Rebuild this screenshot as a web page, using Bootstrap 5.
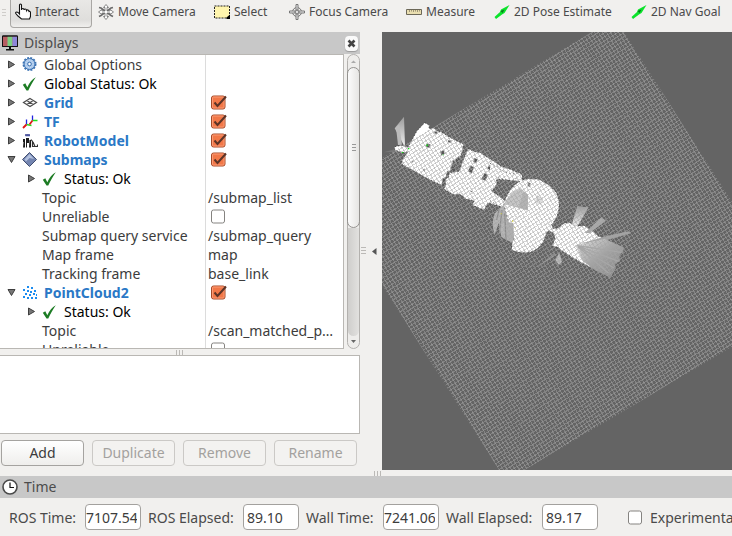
<!DOCTYPE html>
<html lang="en">
<head>
<meta charset="utf-8">
<meta name="viewport" content="width=device-width, initial-scale=1">
<title>RViz</title>
<link rel="stylesheet" href="https://cdn.jsdelivr.net/npm/bootstrap@5.3.0/dist/css/bootstrap.min.css">
<style>
body{font-family:"Noto Sans","Open Sans",sans-serif;font-size:14px;line-height:19px;color:#3c3c3c;background:#f1f0ee}
svg{display:block;flex:none}
.tools{display:grid;grid-template-columns:83px 116px 75px 117px 88px 137px auto;grid-auto-rows:28px;padding:0 0 4px 10px;position:relative}
.tools::before{content:"";position:absolute;left:2px;top:9px;width:4px;height:9px;background:repeating-linear-gradient(#cfcdca 0 1px,transparent 1px 3px)}
.tool{border:1px solid transparent;border-top:0;background:none;color:#4a4a4a;font-size:12px;line-height:16px;padding:0 4px 4px;gap:4px;white-space:nowrap}
.tool.pressed{border-color:#a9a7a4;border-radius:0 0 4px 4px;background:linear-gradient(#e9e8e6,#dfdedc 75%,#f0efed);justify-self:start;width:82px}
.main-area{min-height:0}
.left-pane{width:360px}
.title-bar{background:#c8c8c8;height:22px;padding:0 2px;color:#4c4c4c;gap:6px}
.title-bar span{padding-bottom:2px}
.close-btn{width:13px;height:15px;border:0;border-radius:4px;background:#fafafa;box-shadow:0 1px 1px #9a9a9a;padding:0 2px}
.tree-box{flex:1 1 0;min-height:0;overflow:hidden}
.tree-view{flex:1 1 0;background:#fff;border:1px solid #b9b7b3;border-left:0;overflow:hidden}
.tree{width:100%;table-layout:fixed;border-collapse:separate;border-spacing:0}
.tree td{height:19px;padding:0;line-height:19px;white-space:nowrap;overflow:hidden;text-overflow:ellipsis}
.tree .c-name{width:206px;border-right:1px solid #dcdcdc}
.tree .c-val{padding:0 4px 0 2px}
.tree .name{display:flex;align-items:center;gap:6px;padding-left:7px;height:19px}
.tree .child{padding-left:27px}
.tree .prop{padding-left:42px}
.tree .ok{color:#000}
.tree .disp{color:#2a78c6;font-weight:700}
.expander{border:0;background:none;padding:0;width:9px;height:9px}
.chk{appearance:none;display:block;margin:0 0 0 3px;width:16px;height:15px;background:url("data:image/svg+xml,%3Csvg xmlns='http://www.w3.org/2000/svg' viewBox='0 0 16 15'%3E%3Crect x='.5' y='1' width='13' height='13' rx='2' fill='%23fff' stroke='%23858380'/%3E%3C/svg%3E")}
.chk:checked{background:url("data:image/svg+xml,%3Csvg xmlns='http://www.w3.org/2000/svg' viewBox='0 0 16 15'%3E%3Crect x='.5' y='1' width='13.5' height='13' rx='2' fill='%23f27848' stroke='%23a34a28'/%3E%3Crect x='1.5' y='2' width='11.500' height='11' rx='1' fill='none' stroke='%23fa9b76'/%3E%3Cpath d='M3.500 7.500l3 3.500L15 1.500' fill='none' stroke='%235c3427' stroke-width='2'/%3E%3C/svg%3E")}
.scroller{width:13px;margin-left:3px;border:1px solid #b3b1ae;border-radius:7px;background:#eeedeb}
.scroller .thumb{height:161px;border:1px solid #94928f;border-radius:7px;background:linear-gradient(90deg,#fbfbfb,#e6e5e3);margin:0 -1px}
.scroller button{border:0;background:none;padding:0;height:12px}
.scroller .gap{background:linear-gradient(90deg,#cfcecc,#e2e1df);border-radius:0 0 6px 6px}
.grip-x{width:8px;height:5px;background:repeating-linear-gradient(90deg,#bbb9b6 0 1px,transparent 1px 3px)}
.grip-y{width:5px;height:8px;background:repeating-linear-gradient(#bbb9b6 0 1px,transparent 1px 3px)}
.split{height:6px}
.info{height:79px;background:#fff;border:1px solid #b9b7b3;border-left:0}
.actions{padding:6px 3px 4px 1px;gap:8px}
.act{flex:1 1 0;height:26px;padding:0;border:1px solid #a5a3a0;border-radius:4px;background:linear-gradient(#fff,#efeeec);color:#3c3c3c;font-size:14px;line-height:22px}
.act:disabled{border-color:#cbc9c6;background:#f3f2f0;color:#a3a19e;opacity:1}
.side-split{width:22px;padding-left:1px}
.view3d{background:#646464;min-width:0;min-height:0;overflow:hidden}
.view3d svg{width:100%;height:100%}
.times{height:38px;display:grid;grid-template-columns:76px 56px 102px 56px 84px 56px 103px 56px auto;align-items:center;padding-left:9px;color:#4a4a4a;white-space:nowrap;overflow:hidden}
.times .lab-next{padding-left:7px}
.times .chk-wrap{padding-left:27px;gap:6px}
.tf{width:56px;height:26px;border:1px solid #a3a19e;border-radius:4px;background:#fff;color:#3c3c3c;font-size:14px;padding:0 3px}
.tf-long{text-align:right;padding:0 3px 0 0}
</style>
<script src="https://cdn.jsdelivr.net/npm/bootstrap@5.3.0/dist/js/bootstrap.bundle.min.js"></script>
</head>
<body>
<svg width="0" height="0" class="position-absolute" aria-hidden="true">
<defs>
<symbol id="closed" viewBox="0 0 9 9"><path d="M1.500 1v7L7.500 4.500z" fill="#777" stroke="#3e3e3e"/></symbol>
<symbol id="opened" viewBox="0 0 9 9"><path d="M1 1.500h7L4.500 7.500z" fill="#777" stroke="#3e3e3e"/></symbol>
<symbol id="tick" viewBox="0 0 16 16"><path d="M.8 8.800l2.500-1.600 2 4C7.500 6.500 10 3.500 13.800 1.200 10.800 5.500 8.500 9.500 6.300 14.500H4.500z" fill="#1d7c24"/></symbol>
<symbol id="arrow" viewBox="0 0 16 16"><path d="M.5 13L6 8l1-2.500L15.500 1l-5 8L8 10.500 2 15z" fill="#0be32b"/><path d="M6.500 7l4-1.500L8.500 9z" fill="#087a1b"/></symbol>
<linearGradient id="ray" x1="0" y1="0" x2="1" y2="1"><stop offset="0" stop-color="#e4e4e4"/><stop offset=".5" stop-color="#a2a2a2"/><stop offset="1" stop-color="#858585"/></linearGradient>
<linearGradient id="rayUp" x1="0" y1="1" x2="0" y2="0"><stop offset="0" stop-color="#efefef"/><stop offset="1" stop-color="#9a9a9a"/></linearGradient>
<clipPath id="plane"><path d="M233-14L-58 161 124 449 417 275z"/></clipPath>
</defs>
</svg>
<div class="d-flex flex-column vh-100 overflow-hidden">
<header class="tools">
 <button class="tool pressed d-flex align-items-center" type="button"><svg width="16" height="17" viewBox="0 0 16 17"><path d="M4.500 10V2q0-1 1-1t1 1v5q0-1.500 1.300-1.500T9 7q0-1 1.200-1T11.500 7.500Q12 6.500 13 7t1 1.500q1.500-.5 1.500 1.500v3.500l-1 2.500h-8L3 13 .8 10.500q-.5-1.500 1-1.500 1.200 0 2.700 2z" fill="#fff" stroke="#111" stroke-width="1.100"/></svg>Interact</button>
 <button class="tool d-flex align-items-center" type="button"><svg width="16" height="16" viewBox="0 0 16 16"><g fill="#fff" stroke="#6c6c6c" stroke-width=".8"><path d="M1 3.500L3 4l10 7.500 2 1M1 12.500l2-1L13 4l2-.5" fill="none" stroke-width="1.600"/><path d="M8 .5l2.500 3H9V7h3V5.500L15.500 8 12 10.500V9H9v3.500h1.500L8 15.500l-2.500-3H7V9H4v1.500L.5 8 4 5.500V7h3V3.500H5.500z"/></g></svg>Move Camera</button>
 <button class="tool d-flex align-items-center" type="button"><svg width="16" height="14" viewBox="0 0 16 14"><path d="M.5 1h15v12H.5z" fill="#fff5ae" stroke="#222" stroke-dasharray="2 1"/><path d="M16 9.500V14h-3.500v-1.500z" fill="#000"/></svg>Select</button>
 <button class="tool d-flex align-items-center" type="button"><svg width="16" height="16" viewBox="0 0 16 16"><g fill="none" stroke="#777"><circle cx="8" cy="8" r="4.500"/><circle cx="8" cy="8" r="2" fill="#ddd"/><path d="M7 .5h2V6H7zM7 10h2v5.500H7zM.5 7H6v2H.5zM10 7h5.500v2H10z" fill="#eee"/></g></svg>Focus Camera</button>
 <button class="tool d-flex align-items-center" type="button"><svg width="16" height="16" viewBox="0 0 16 16"><path d="M.5 5.500h15v5H.5z" fill="#e9deb0" stroke="#6c6858"/><path d="M3.500 6v2M5.500 6v1.500M7.500 6v2M9.500 6v1.500M11.500 6v2M13.500 6v1.500" stroke="#8c8468" stroke-width=".8"/></svg>Measure</button>
 <button class="tool d-flex align-items-center" type="button"><svg width="16" height="16"><use href="#arrow"/></svg>2D Pose Estimate</button>
 <button class="tool d-flex align-items-center" type="button"><svg width="16" height="16"><use href="#arrow"/></svg>2D Nav Goal</button>
</header>
<main class="main-area d-flex flex-grow-1">
 <section class="left-pane d-flex flex-column flex-shrink-0">
  <div class="title-bar d-flex align-items-center">
   <svg width="16" height="16" viewBox="0 0 16 16"><path d="M.5 1h15v10.500H.5z" fill="#b75d62" stroke="#111"/><path d="M5.500 1.500h5v9.500h-5z" fill="#7ccf83"/><path d="M10.500 1.500H15V11h-4.500z" fill="#8d86d8"/><path d="M.5 1h15v10.500H.5z" fill="none" stroke="#111"/><path d="M7 12h2v2h3v1.500H4V14h3z" fill="#111"/></svg>
   <span>Displays</span>
   <button class="close-btn ms-auto me-0" type="button" aria-label="Close"><svg width="9" height="9" viewBox="0 0 9 9"><path d="M1.500 1.500l6 6M7.500 1.500l-6 6" stroke="#444" stroke-width="2.600"/></svg></button>
  </div>
  <div class="tree-box d-flex">
   <div class="tree-view">
    <table class="tree">
     <tr><td class="c-name"><div class="name"><button class="expander" type="button" aria-label="Expand"><svg width="9" height="9"><use href="#closed"/></svg></button><svg width="16" height="16" viewBox="0 0 16 16"><circle cx="7.500" cy="7" r="5.500" fill="#a9c7ea" stroke="#3d73b3" stroke-width="1"/><circle cx="7.500" cy="7" r="6.200" fill="none" stroke="#3d73b3" stroke-width="1.600" stroke-dasharray="2 1.250"/><circle cx="7.500" cy="7" r="3.600" fill="none" stroke="#d6e5f7" stroke-dasharray="1 1"/><circle cx="7.500" cy="7" r="1.800" fill="#fff" stroke="#3d73b3"/></svg>Global Options</div></td><td class="c-val"></td></tr>
     <tr><td class="c-name"><div class="name ok"><button class="expander" type="button" aria-label="Expand"><svg width="9" height="9"><use href="#closed"/></svg></button><svg width="16" height="16"><use href="#tick"/></svg>Global Status: Ok</div></td><td class="c-val"></td></tr>
     <tr><td class="c-name"><div class="name disp"><button class="expander" type="button" aria-label="Expand"><svg width="9" height="9"><use href="#closed"/></svg></button><svg width="16" height="16" viewBox="0 0 16 16"><path d="M8 3.500L14.500 7.500 8 11.500 1.500 7.500zM4.700 5.500l6.500 4M11.300 5.500l-6.500 4" fill="none" stroke="#4c4c4c" stroke-width="1.200"/></svg>Grid</div></td><td class="c-val"><input class="chk" type="checkbox" checked aria-label="Grid"></td></tr>
     <tr><td class="c-name"><div class="name disp"><button class="expander" type="button" aria-label="Expand"><svg width="9" height="9"><use href="#closed"/></svg></button><svg width="16" height="16" viewBox="0 0 16 16"><g fill="none" stroke-width="1.300"><path d="M10.500 6.500V1.500M4.500 10.500V5.500" stroke="#2222e0"/><path d="M10.500 6.500h5M4.500 10.500l5 1" stroke="#20e020"/><path d="M10.500 6.500l-3 4M4.500 10.500L1 14" stroke="#e01818" stroke-width="1.800"/></g></svg>TF</div></td><td class="c-val"><input class="chk" type="checkbox" checked aria-label="TF"></td></tr>
     <tr><td class="c-name"><div class="name disp"><button class="expander" type="button" aria-label="Expand"><svg width="9" height="9"><use href="#closed"/></svg></button><svg width="16" height="16" viewBox="0 0 16 16"><path d="M3.500 2q2-1.500 4.500 0v1.500H3.500z" fill="#9aa7d8"/><path d="M3 2h5" stroke="#222a80" stroke-width="1.300"/><path d="M1 6h2v3H1zM1.500 9H3v5.500H1zM4 5h3v5H5v4.500H4zM7.500 7H9v7.500H7z" fill="#1b1b1b"/><path d="M9 6.500l1.500 2v5h2M11 9l2 4.500h2.500v-2" stroke="#333" fill="none" stroke-width="1.200"/></svg>RobotModel</div></td><td class="c-val"><input class="chk" type="checkbox" checked aria-label="RobotModel"></td></tr>
     <tr><td class="c-name"><div class="name disp"><button class="expander" type="button" aria-label="Collapse"><svg width="9" height="9"><use href="#opened"/></svg></button><svg width="16" height="16" viewBox="0 0 16 16"><path d="M7.500.5l7 7-7 7-7-7z" fill="#7485b0" stroke="#414e70"/><path d="M7.500 2L12 7 7.500 6 4 9.500 2.500 7.500z" fill="#b3c1de"/></svg>Submaps</div></td><td class="c-val"><input class="chk" type="checkbox" checked aria-label="Submaps"></td></tr>
     <tr><td class="c-name"><div class="name child ok"><button class="expander" type="button" aria-label="Expand"><svg width="9" height="9"><use href="#closed"/></svg></button><svg width="16" height="16"><use href="#tick"/></svg>Status: Ok</div></td><td class="c-val"></td></tr>
     <tr><td class="c-name"><div class="name prop">Topic</div></td><td class="c-val">/submap_list</td></tr>
     <tr><td class="c-name"><div class="name prop"><label for="unrel1">Unreliable</label></div></td><td class="c-val"><input class="chk" type="checkbox" id="unrel1"></td></tr>
     <tr><td class="c-name"><div class="name prop">Submap query service</div></td><td class="c-val">/submap_query</td></tr>
     <tr><td class="c-name"><div class="name prop">Map frame</div></td><td class="c-val">map</td></tr>
     <tr><td class="c-name"><div class="name prop">Tracking frame</div></td><td class="c-val">base_link</td></tr>
     <tr><td class="c-name"><div class="name disp"><button class="expander" type="button" aria-label="Collapse"><svg width="9" height="9"><use href="#opened"/></svg></button><svg width="16" height="16" viewBox="0 0 16 16"><path d="M5 1h2v2H5zM9 2h2v2H9zM1 4h2v2H1zM5 5h2v2H5zM12 5h2v2h-2zM8 6h2v2H8zM3 8h2v2H3zM7 9h2v2H7zM11 8h2v2h-2zM14 9h1v2h-1zM1 11h2v2H1zM5 12h2v2H5zM9 12h2v2H9zM13 12h2v2h-2z" fill="#1b8cf0"/></svg>PointCloud2</div></td><td class="c-val"><input class="chk" type="checkbox" checked aria-label="PointCloud2"></td></tr>
     <tr><td class="c-name"><div class="name child ok"><button class="expander" type="button" aria-label="Expand"><svg width="9" height="9"><use href="#closed"/></svg></button><svg width="16" height="16"><use href="#tick"/></svg>Status: Ok</div></td><td class="c-val"></td></tr>
     <tr><td class="c-name"><div class="name prop">Topic</div></td><td class="c-val">/scan_matched_points2</td></tr>
     <tr><td class="c-name"><div class="name prop"><label for="unrel2">Unreliable</label></div></td><td class="c-val"><input class="chk" type="checkbox" id="unrel2"></td></tr>
    </table>
   </div>
   <div class="scroller d-flex flex-column">
    <button type="button" aria-label="Scroll up"><svg width="11" height="12" viewBox="0 0 11 12"><path d="M3 8h5L5.500 5.500z" fill="#aaa"/></svg></button>
    <div class="thumb d-flex align-items-center justify-content-center"><svg width="5" height="8" viewBox="0 0 5 8"><path d="M1 .5h4M1 3.500h4M1 6.500h4" stroke="#999"/></svg></div>
    <div class="gap flex-grow-1"></div>
    <button type="button" aria-label="Scroll down"><svg width="11" height="12" viewBox="0 0 11 12"><path d="M3 4h5L5.500 7z" fill="#666"/></svg></button>
   </div>
  </div>
  <div class="split d-flex align-items-center justify-content-center"><div class="grip-x"></div></div>
  <div class="info"></div>
  <div class="actions d-flex">
   <button class="act" type="button">Add</button>
   <button class="act" type="button" disabled>Duplicate</button>
   <button class="act" type="button" disabled>Remove</button>
   <button class="act" type="button" disabled>Rename</button>
  </div>
 </section>
 <div class="side-split d-flex align-items-center flex-shrink-0"><div class="grip-y"></div><svg class="ms-1" width="8" height="9" viewBox="0 0 8 9"><path d="M6.500 1v7L2 4.500z" fill="#555"/></svg></div>
 <section class="view3d flex-grow-1">
  <svg viewBox="0 0 350 438" preserveAspectRatio="xMidYMid slice" role="img" aria-label="Map view">
   <g transform="translate(0 68) scale(.33333)">
    <path d="M68 140L38 85l28-35 3 85z" fill="url(#rayUp)"/>
    <path d="M48 135L42 82l10-8 8 60z" fill="#bbb"/><path d="M70 155L5 157l35-10z" fill="#777"/>
    <g fill="#fff" stroke="#222" stroke-width="2" stroke-dasharray="4 6">
     <path d="M128 68L142 76 141 86 155 84 165 94 178 96 200 110 218 120 245 133 241 148 246 146 238 160 232 185 224 188 214 180 208 200 205 214 196 214 190 235 180 256 162 248 130 232 100 215 58 192 62 178 78 155 62 158 38 150 38 140 60 136 78 142 90 120 104 94z"/>
     <path d="M258 146L280 156 296 158 310 168 325 178 345 190 355 198 385 208 420 224 420 246 385 240 345 238 335 258 326 272 352 288 366 300 420 332 420 350 352 318 318 308 306 330 272 316 276 302 250 296 240 286 228 282 215 284 186 268 192 252 186 240 200 232 202 218 232 214 240 190z"/>
    </g>
    <path d="M219 180l12-12 4 12-8 16zM206 205l10-14 7 14-4 12-12-2zM258 213l8-16 10 5-7 18zM298 237l10-18 10 6-8 17zM277 174l10 4-5 12-8-4zM322 194l8 8-6 9-8-6zM133 131l12 2-2 10-10-2zM175 155l10-4 3 11-10 4zM198 121l10 1-2 6-8-2zM158 94l8 2-2 6-7-2zM122 210l5-4 2 9zM265 273l6 0-3 4zM90 182l5 1-4 5zM182 234l10 0-3 28-10-4z" fill="#555" stroke="#aaa"/>
    <path d="M78 144h4v4h-4zM59 156h5v3h-5zM133 133h4v6h-4zM181 162h4v4h-4z" fill="#12e512"/>
   </g>
   <g transform="translate(108 128) scale(.33333)">
    <path d="M0 0L10 12 24 22 30 28 50 38 66 42 92 38 80 54 66 62 44 58 18 52 12 60 22 66 14 84 4 92 42 120V145L0 120z" fill="#fff"/>
    <path d="M0 10L10 14 24 22 30 28 50 38 66 42 92 38M80 54L66 62 44 58 18 52M22 66L14 84 4 92 42 120M0 122L40 146" fill="none" stroke="#222" stroke-width="2" stroke-dasharray="4 7"/>
    <path d="M45 130L15 160Q2 190 14 224l12-35 8 42 34 18 10-50z" fill="#b5b5b5"/>
    <path d="M28 145L20 180M36 150l-8 70M44 160l4 78" stroke="#8c8c8c" stroke-width="4"/>
    <path d="M42 134Q48 100 75 74L92 62Q120 52 150 60L176 75 190 88 200 100 206 120Q210 150 200 170L190 188 184 194 190 206 205 204 222 190 240 188 256 198 285 198 308 214 324 228 350 240 340 252 256 256 286 292 306 324 274 308 244 290 212 270 206 262 186 258 196 236 190 218 178 212 170 216 160 245Q145 268 122 276 95 282 66 270L66 248 72 236 62 200 50 168z" fill="#fff" stroke="#222" stroke-width="2" stroke-dasharray="4 8"/>
    <path d="M42 132Q55 100 92 84l22 20 0 48z" fill="#c6c6c6"/><path d="M100 95l14 10-2 45-26-8z" fill="#b4b4b4"/><path d="M140 105l18 8-4 20-20-4z" fill="#ddd"/>
    <path d="M50 190l20-2 2 44-6 14-14-6z" fill="#b0b0b0"/>
    <path d="M113 66l9 4-3 12-6-6z" fill="#777"/>
    <path d="M245 195l17-58 16 4 18 0-24 42-10 16z" fill="url(#rayUp)"/>
    <path d="M285 218L334 172 348 182 298 220z" fill="#aaa"/><path d="M270 252L350 228 416 214 422 220 352 240z" fill="#a2a2a2"/>
    <path d="M256 256L345 236 360 244 400 262 400 276 388 284 390 302 376 312V328L361 353 313 329 279 303z" fill="url(#ray)"/>
    <path d="M262 257l132 20M264 258l122 46M264 259l108 65M264 260l92 80" stroke="#a8a8a8" stroke-width="4"/>
    <path d="M208 278l8 28-10 8-10-14z" fill="#bbb"/><path d="M195 276l-35 30-15 16 48-34z" fill="#888"/>
    <path d="M32 160h3v3h-3zM66 180h4v5h-4zM74 202h3v3h-3z" fill="#e4df3c"/>
   </g>
   <g stroke="#a6a6a6" stroke-opacity=".48" shape-rendering="crispEdges" fill="none" clip-path="url(#plane)">
    <path d="M87 73L271 366" stroke-width="344" stroke-dasharray="1 2.450"/>
    <path d="M34 307L325 132" stroke-width="350" stroke-dasharray="1 2.450"/>
   </g>
  </svg>
 </section>
</main>
<div class="split d-flex align-items-center justify-content-center"><div class="grip-x ms-4"></div></div>
<footer>
 <div class="title-bar d-flex align-items-center">
  <svg width="16" height="16" viewBox="0 0 16 16"><circle cx="8" cy="8" r="7" fill="#fff" stroke="#4a4a4a" stroke-width="1.600"/><path d="M8 3.500V8.500h4" fill="none" stroke="#111" stroke-width="1.200"/></svg>
  <span>Time</span>
 </div>
 <div class="times">
  <label for="rt">ROS Time:</label><input class="tf tf-long" id="rt" value="7107.54">
  <label class="lab-next" for="re">ROS Elapsed:</label><input class="tf" id="re" value="89.10">
  <label class="lab-next" for="wt">Wall Time:</label><input class="tf tf-long" id="wt" value="7241.06">
  <label class="lab-next" for="we">Wall Elapsed:</label><input class="tf" id="we" value="89.17">
  <div class="chk-wrap d-flex align-items-center"><input class="chk" type="checkbox" id="ex"><label for="ex">Experimental</label></div>
 </div>
</footer>
</div>
</body>
</html>
